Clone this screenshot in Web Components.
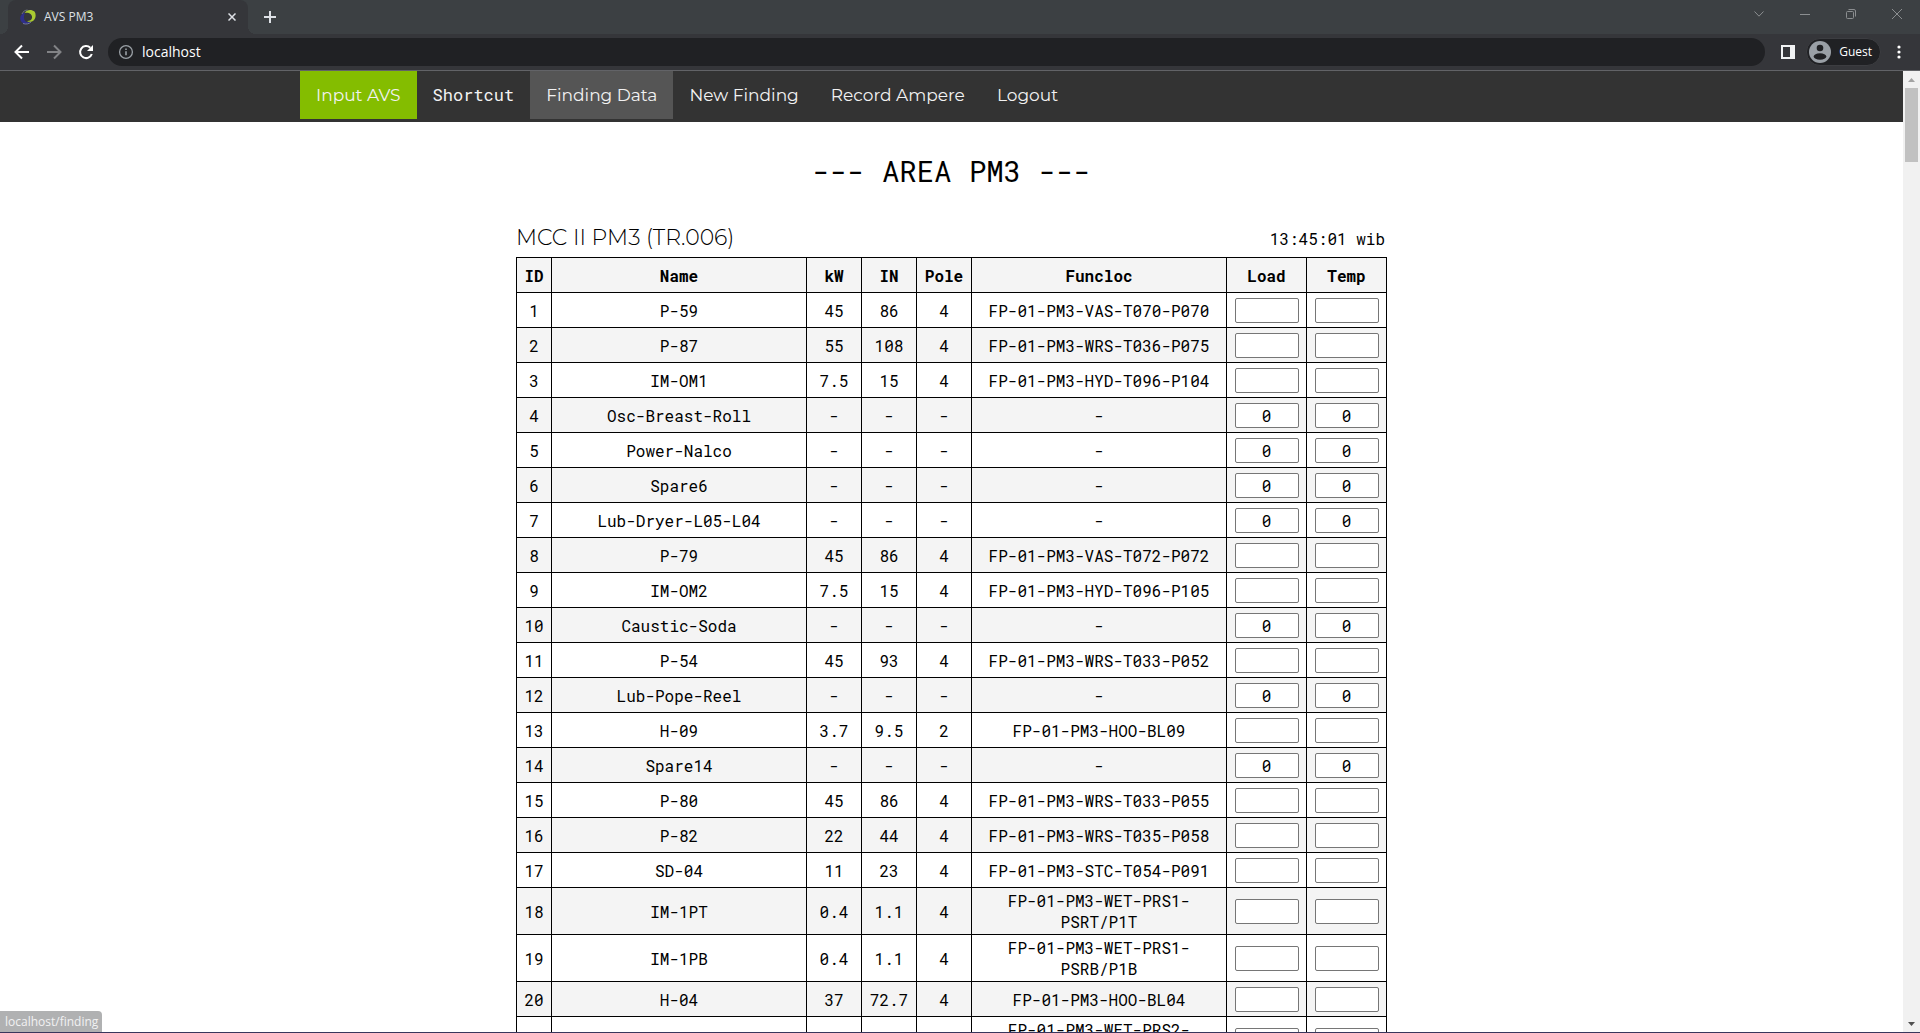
<!DOCTYPE html>
<html lang="en">
<head>
<meta charset="utf-8">
<title>AVS PM3</title>
<style>
  html, body { height: 100%; }
  body { margin: 0; overflow: hidden; background: #fff; --ui: "Open Sans", "Noto Sans", sans-serif; --mono: "Roboto Mono", "Liberation Mono", monospace; --display: Montserrat, Inter, sans-serif; }
</style>
</head>
<body>
<browser-window>
  <tab-strip slot="tabs"></tab-strip>
  <address-bar slot="bar"></address-bar>
  <site-nav>
    <nav-link href="/" kind="brand">Input AVS</nav-link>
    <nav-link href="/shortcut" kind="mono">Shortcut</nav-link>
    <nav-link href="/finding" kind="active">Finding Data</nav-link>
    <nav-link href="/new">New Finding</nav-link>
    <nav-link href="/record">Record Ampere</nav-link>
    <nav-link href="/logout">Logout</nav-link>
  </site-nav>
  <area-page>
    <span slot="title">--- AREA PM3 ---</span>
    <span slot="panel">MCC II PM3 (TR.006)</span>
    <span slot="clock">13:45:01 wib</span>
    <motor-table></motor-table>
  </area-page>
  <page-scroll slot="scroll"></page-scroll>
  <span slot="status">localhost/finding</span>
</browser-window>

<script>
const define = (name, html, setup) => customElements.define(name, class extends HTMLElement {
  constructor() {
    super();
    const root = this.attachShadow({ mode: 'open' });
    root.innerHTML = '<style>*{box-sizing:border-box}button{border:0;padding:0;margin:0;background:none;display:grid;place-items:center;color:inherit}svg{display:block}</style>' + html;
  }
  connectedCallback() { if (setup) setup(this, this.shadowRoot); }
});

define('browser-window', `
<style>
  :host { display: flex; flex-direction: column; height: 100vh; position: relative; }
  .view { flex: 1; min-height: 0; display: grid; grid-template-columns: minmax(0,1fr) 17px; border-top: 1px solid #626367; border-bottom: 1px solid #38365c; }
  main { overflow: hidden; }
  .status { position: absolute; left: 0; bottom: 1px; height: 21px; padding: 1px 4px 0 5px; display: flex; align-items: center; background: #b0b1b2; color: #f2f2f2; border-radius: 0 4px 0 0; font: 12px/16px var(--ui); }
</style>
<slot name="tabs"></slot><slot name="bar"></slot>
<div class="view"><main><slot></slot></main><slot name="scroll"></slot></div>
<div class="status"><slot name="status"></slot></div>`);

define('tab-strip', `
<style>
  :host { display: flex; height: 34px; padding-left: 8px; background: #3c4043; color: #dee1e6; }
  .tab { position: relative; width: 240px; display: flex; align-items: center; gap: 8px; padding: 0 10px 0 12px; background: #35363a; border-radius: 8px 8px 0 0; font: 12px/16px var(--ui); }
  .tab::before, .tab::after { content: ""; position: absolute; bottom: 0; width: 8px; height: 8px; }
  .tab::before { right: 100%; background: radial-gradient(circle at 0 0, transparent 8px, #35363a 8px); }
  .tab::after { left: 100%; background: radial-gradient(circle at 100% 0, transparent 8px, #35363a 8px); }
  .tab span { flex: 1; }
  .tab button { width: 12px; height: 12px; }
  .add { width: 44px; height: 34px; }
  .win { margin-left: auto; display: flex; color: #8b8e90; }
  .win button { width: 46px; height: 28px; }
</style>
<div class="tab">
  <svg width="16" height="16" viewBox="0 0 16 16"><path d="M5.500 3.500C0 4.500-1 10 1.500 13c2.500 2.500 7 2 9.500 0-3 .5-5.500 0-6.500-2-1-2.500-.5-5.500 1-7.500z" fill="#2f2f8c"/><path d="M3 14.500c3 1 6 .5 8-1.500" stroke="#8286b8" stroke-width=".8" fill="none"/><path d="M4.500 4C7 0 12 .5 14.500 2.500c2 3 1.500 8-2.500 10-2 .6-4 .3-5-.6 3 .1 4.500-1 5-2.900.6-3-2.500-6-7.500-5z" fill="#a9ca31"/><path d="M2 5C3 2.500 5 1.200 7.500 1" stroke="#7d8298" stroke-width=".8" fill="none"/></svg>
  <span>AVS PM3</span>
  <button aria-label="Close tab"><svg width="8" height="8" viewBox="0 0 8 8" stroke="#dee1e6" stroke-width="1.500"><path d="M.5.5l7 7M7.500.5l-7 7"/></svg></button>
</div>
<button class="add" aria-label="New tab"><svg width="12" height="12" viewBox="0 0 12 12" stroke="#dee1e6" stroke-width="2"><path d="M6 0v12M0 6h12"/></svg></button>
<div class="win">
  <button aria-label="Search tabs"><svg width="10" height="6" viewBox="0 0 10 6" fill="none" stroke="currentColor"><path d="M.5.5L5 5.200 9.500.5"/></svg></button>
  <button aria-label="Minimize"><svg width="10" height="1"><rect width="10" height="1" fill="currentColor"/></svg></button>
  <button aria-label="Restore"><svg width="10" height="10" viewBox="0 0 10 10" fill="none" stroke="currentColor"><rect x=".5" y="2.500" width="7" height="7" rx="1"/><path d="M2.500.5H8Q9.500.5 9.500 2v5.500"/></svg></button>
  <button aria-label="Close window"><svg width="10" height="10" viewBox="0 0 10 10" fill="none" stroke="currentColor"><path d="M0 0l10 10M10 0L0 10"/></svg></button>
</div>`);

define('address-bar', `
<style>
  :host { display: flex; align-items: center; height: 36px; padding: 0 13px 0 6px; background: #35363a; color: #fff; }
  .tool { width: 32px; height: 28px; }
  label { flex: 1; display: flex; align-items: center; gap: 8px; height: 28px; margin: 0 11px 0 6px; padding-left: 10px; background: #202124; border-radius: 14px; }
  input { flex: 1; border: 0; padding: 0; background: none; color: #fff; outline: 0; font: 14px/20px var(--ui); }
  .panel { width: 24px; height: 28px; margin-right: 6px; }
  .guest { display: flex; align-items: center; gap: 8px; height: 28px; padding: 0 8px 0 2px; background: #202124; border: 1px solid #3c3d41; border-radius: 14px; font: 12px/16px var(--ui); }
  .menu { width: 16px; height: 28px; margin-left: 10px; }
</style>
<button class="tool" aria-label="Back"><svg width="16" height="16" viewBox="0 0 16 16" fill="none" stroke="#fff" stroke-width="2"><path d="M15 8H2.500M8 1.500L1.500 8 8 14.500"/></svg></button>
<button class="tool" aria-label="Forward"><svg width="16" height="16" viewBox="0 0 16 16" fill="none" stroke="#828386" stroke-width="2"><path d="M1 8h12.500M8 1.500L14.500 8 8 14.500"/></svg></button>
<button class="tool" aria-label="Reload"><svg width="16" height="16" viewBox="0 0 16 16" fill="none" stroke="#fff" stroke-width="2"><path d="M13.800 10A6 6 0 1 1 12.300 3.800"/><path d="M15 1v6H9z" fill="#fff" stroke="none"/></svg></button>
<label><svg width="16" height="16" viewBox="0 0 16 16" fill="none" stroke="#9aa0a6"><circle cx="8" cy="8" r="6.400" stroke-width="1.300"/><path d="M8 7.200v4M8 4.400v1.500" stroke-width="1.600"/></svg><input aria-label="Address" value="localhost"></label>
<button class="panel" aria-label="Side panel"><svg width="14" height="14"><path d="M0 0h14v14H0zM2 2v10h7V2z" fill="#f1f3f4" fill-rule="evenodd"/></svg></button>
<button class="guest"><svg width="22" height="22" viewBox="0 0 22 22"><circle cx="11" cy="11" r="11" fill="#9aa0a6"/><circle cx="11" cy="7" r="3.300" fill="#202124"/><ellipse cx="11" cy="15.500" rx="6.300" ry="3.300" fill="#202124"/></svg><span>Guest</span></button>
<button class="menu" aria-label="Menu"><svg width="4" height="14" fill="#fff"><circle cx="2" cy="2" r="1.600"/><circle cx="2" cy="7" r="1.600"/><circle cx="2" cy="12" r="1.600"/></svg></button>`);

define('page-scroll', `
<style>
  :host { display: flex; flex-direction: column; align-items: center; background: #f1f1f1; }
  .arrow { width: 17px; height: 17px; }
  .thumb { width: 13px; height: 74px; background: #c1c1c1; }
  .arrow:last-child { margin-top: auto; }
</style>
<button class="arrow" aria-label="Scroll up"><svg width="7" height="4"><path d="M0 4L3.500 0 7 4z" fill="#a3a3a3"/></svg></button>
<div class="thumb"></div>
<button class="arrow" aria-label="Scroll down"><svg width="7" height="4"><path d="M0 0h7L3.500 4z" fill="#505050"/></svg></button>`);

define('site-nav', `
<style>
  :host { display: block; background: #333; }
  nav { display: flex; max-width: 1303px; height: 51px; margin: 0 auto; }
</style>
<nav><slot></slot></nav>`);

define('nav-link', `
<style>
  :host { display: block; height: 48px; }
  a { display: flex; align-items: center; height: 100%; padding: 0 16px; color: #f2f2f2; text-decoration: none; font: 17px/24px var(--display); }
  :host([kind=brand]) { background: #84bd00; }
  :host([kind=active]) { background: #555; }
  :host([kind=mono]) a { font: 17px/24px var(--mono); }
</style>
<a><slot></slot></a>`, (el, root) => { root.querySelector('a').href = el.getAttribute('href'); });

define('area-page', `
<style>
  :host { display: block; background: #fff; color: #000; }
  h1 { margin: 29px 0 32px; text-align: center; font: 29px/40px var(--mono); }
  section { max-width: 871px; margin: 0 auto; }
  header { display: flex; justify-content: space-between; align-items: baseline; height: 34px; padding-right: 2px; }
  h2 { margin: 0; font: 300 22px/30px var(--display); }
  time { font: 16px/20px var(--mono); }
</style>
<h1><slot name="title"></slot></h1>
<section><header><h2><slot name="panel"></slot></h2><time><slot name="clock"></slot></time></header><slot></slot></section>`);

const motors = [
  ['P-59', '45', '86', '4', 'FP-01-PM3-VAS-T070-P070'],
  ['P-87', '55', '108', '4', 'FP-01-PM3-WRS-T036-P075'],
  ['IM-OM1', '7.5', '15', '4', 'FP-01-PM3-HYD-T096-P104'],
  ['Osc-Breast-Roll'],
  ['Power-Nalco'],
  ['Spare6'],
  ['Lub-Dryer-L05-L04'],
  ['P-79', '45', '86', '4', 'FP-01-PM3-VAS-T072-P072'],
  ['IM-OM2', '7.5', '15', '4', 'FP-01-PM3-HYD-T096-P105'],
  ['Caustic-Soda'],
  ['P-54', '45', '93', '4', 'FP-01-PM3-WRS-T033-P052'],
  ['Lub-Pope-Reel'],
  ['H-09', '3.7', '9.5', '2', 'FP-01-PM3-HOO-BL09'],
  ['Spare14'],
  ['P-80', '45', '86', '4', 'FP-01-PM3-WRS-T033-P055'],
  ['P-82', '22', '44', '4', 'FP-01-PM3-WRS-T035-P058'],
  ['SD-04', '11', '23', '4', 'FP-01-PM3-STC-T054-P091'],
  ['IM-1PT', '0.4', '1.1', '4', 'FP-01-PM3-WET-PRS1-PSRT/P1T'],
  ['IM-1PB', '0.4', '1.1', '4', 'FP-01-PM3-WET-PRS1-PSRB/P1B'],
  ['H-04', '37', '72.7', '4', 'FP-01-PM3-HOO-BL04'],
  ['', '', '', '', 'FP-01-PM3-WET-PRS2-<br>&nbsp;']
];

define('motor-table', `
<style>
  :host { display: block; }
  table { width: 100%; table-layout: fixed; border-collapse: collapse; font: 16px/21px var(--mono); text-align: center; }
  th, td { box-sizing: content-box; height: 30px; padding: 2px 0; border: 1px solid #000; }
  td:nth-child(6) { padding: 2px 8px; }
  th { font-weight: 700; }
  thead tr, tbody tr:nth-child(even) { background: #f4f4f4; }
  input { display: block; width: 64px; height: 25px; margin: 0 auto; padding: 0; border: 1px solid #767676; border-radius: 2px; background: #fff; color: #000; font: 16px/20px var(--mono); text-align: center; }
</style>
<table>
  <colgroup><col style="width:35px"><col><col style="width:55px"><col style="width:55px"><col style="width:55px"><col style="width:255px"><col style="width:80px"><col style="width:80px"></colgroup>
  <thead><tr><th>ID</th><th>Name</th><th>kW</th><th>IN</th><th>Pole</th><th>Funcloc</th><th>Load</th><th>Temp</th></tr></thead>
  <tbody></tbody>
</table>`, (el, root) => {
  root.querySelector('tbody').innerHTML = motors.map((m, i) => {
    const idle = m.length === 1;
    const cells = idle ? [m[0], '-', '-', '-', '-'] : m;
    const field = kind => `<td><input aria-label="${kind} ${i + 1}" value="${idle ? '0' : ''}"></td>`;
    return `<tr><td>${m[0] ? i + 1 : ''}</td>${cells.map(c => `<td>${c}</td>`).join('')}${field('Load')}${field('Temp')}</tr>`;
  }).join('');
});
</script>
</body>
</html>
